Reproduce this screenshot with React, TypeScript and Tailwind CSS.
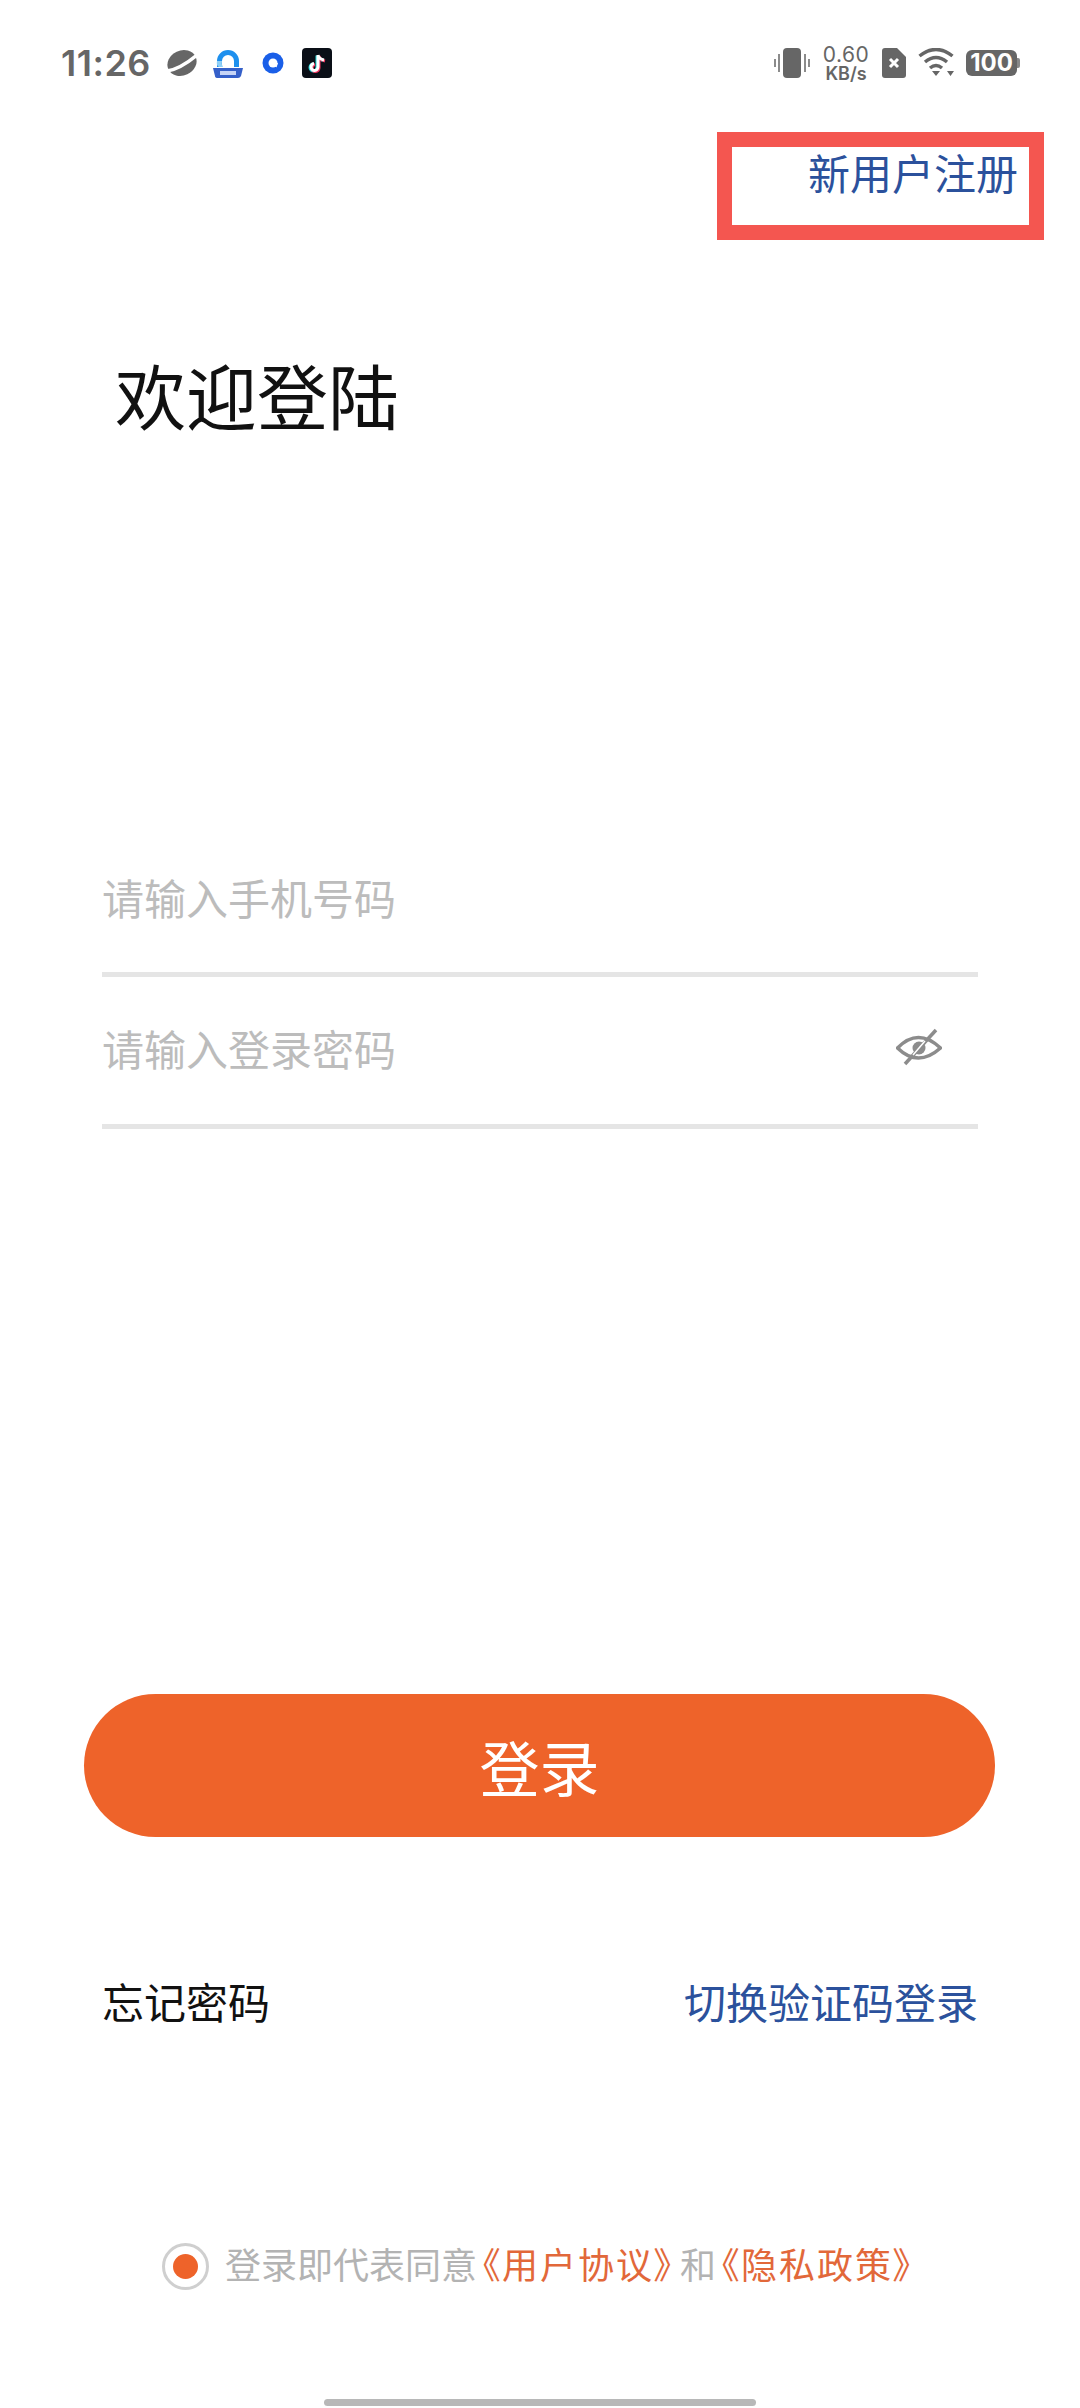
import { useState } from "react";

const cjk = "font-['Noto_Sans_CJK_SC','Noto_Sans',sans-serif]";

function StatusBar() {
  return (
    <div className="flex h-[60px] items-center justify-between pl-[61px] pr-[60px] mt-[33px] text-[#666666]">
      <div className="flex items-center">
        <span className="w-[91px] text-[36px] leading-none font-semibold tracking-[0.5px] font-['Inter',sans-serif]">11:26</span>
        <svg className="ml-[14px]" width="32" height="30" viewBox="0 0 32 30">
          <ellipse cx="16" cy="15" rx="15" ry="12.500" fill="#666" transform="rotate(-25 16 15)" />
          <path d="M1 23 Q14 21 31 7" stroke="#fff" strokeWidth="3.500" fill="none" />
        </svg>
        <svg className="ml-[14px]" width="32" height="32" viewBox="0 0 32 32">
          <path d="M5 20 V14 A11 11 0 0 1 27 14 V20 L22 20 V14 A6 6 0 0 0 10 14 V20 Z" fill="#1e90ee" />
          <path d="M5 14 Q4 18 7 20 H11 Q9 17 10 14 Z" fill="#8fd0f7" />
          <path d="M1 21 H31 L29 29 Q28 31 26 31 H6 Q3 31 3 29 Z" fill="#3560c9" />
          <rect x="8" y="24" width="16" height="4" fill="#c6d4f6" />
        </svg>
        <svg className="ml-[18px]" width="22" height="22" viewBox="0 0 22 22">
          <circle cx="11" cy="11" r="10.500" fill="#1a5fe8" />
          <circle cx="11" cy="11" r="4.500" fill="#fff" />
          <path d="M11 11 L16 11 L14.500 15.500 Z" fill="#fff" />
        </svg>
        <svg className="ml-[18px]" width="30" height="30" viewBox="0 0 30 30">
          <rect width="30" height="30" rx="4" fill="#0a0f17" />
          <path d="M16 7 V19 A3.500 3.500 0 1 1 12 15.500 M16 7 Q17 11 22 12" stroke="#25d9dc" strokeWidth="3" fill="none" transform="translate(-1 0.500)" />
          <path d="M16 7 V19 A3.500 3.500 0 1 1 12 15.500 M16 7 Q17 11 22 12" stroke="#f3355f" strokeWidth="3" fill="none" transform="translate(1 1)" />
          <path d="M16 7 V19 A3.500 3.500 0 1 1 12 15.500 M16 7 Q17 11 22 12" stroke="#fff" strokeWidth="3" fill="none" />
        </svg>
      </div>
      <div className="flex items-center">
        <svg width="36" height="30" viewBox="0 0 36 30">
          <rect x="9" y="0" width="18" height="30" rx="4" fill="#666" />
          <path d="M5 6 V24 M1 11 V19 M31 6 V24 M35 11 V19" stroke="#666" strokeWidth="1.500" />
        </svg>
        <div className="ml-[12px] flex w-[48px] flex-col items-center font-['Inter',sans-serif]">
          <span className="text-[21px] leading-[21px] font-normal tracking-[0.5px]">0.60</span>
          <span className="text-[18px] leading-[18px] font-semibold">KB/s</span>
        </div>
        <svg className="ml-[12px]" width="24" height="30" viewBox="0 0 24 30">
          <path d="M3 0 H15 L24 9 V27 Q24 30 21 30 H3 Q0 30 0 27 V3 Q0 0 3 0 Z" fill="#666" />
          <path d="M8 11 L16 19 M16 11 L8 19" stroke="#fff" strokeWidth="3" />
        </svg>
        <svg className="ml-[12px]" width="36" height="30" viewBox="0 0 36 30">
          <path d="M1.500 8 Q18 -5 34.500 8" stroke="#666" strokeWidth="3.500" fill="none" />
          <path d="M7 14 Q18 5 29 14" stroke="#666" strokeWidth="3.500" fill="none" />
          <path d="M12 20 Q18 15 24 20" stroke="#666" strokeWidth="3.500" fill="none" />
          <path d="M14 23 H22 L18 28 Z M29 23 H36 L32.500 28 Z" fill="#666" />
        </svg>
        <div className="ml-[12px] flex items-center">
          <div className="flex h-[26px] w-[51px] items-center justify-center rounded-[6px] bg-[#666666] text-[24px] font-bold leading-none text-white font-['Inter',sans-serif]">100</div>
          <div className="h-[10px] w-[3px] rounded-r-[2px] bg-[#888888]" />
        </div>
      </div>
    </div>
  );
}

function EyeOff() {
  return (
    <svg width="46" height="40" viewBox="0 0 46 40" fill="none" stroke="#8c8c8c" strokeWidth="3.500">
      <path d="M1.500 21 Q22 0 44.500 21 Q22 41 1.500 21 Z" />
      <circle cx="23" cy="21" r="6.500" fill="#8c8c8c" stroke="none" />
      <path d="M9 37 L40 3" />
      <path d="M17 28 L29 14" stroke="#fff" strokeWidth="1.500" />
    </svg>
  );
}

export default function App() {
  const [phone, setPhone] = useState("");
  const [password, setPassword] = useState("");

  return (
    <div className={`relative flex h-[2408px] w-[1080px] flex-col overflow-hidden bg-white ${cjk}`}>
      <StatusBar />

      {/* the red mark lies over the page, it is not part of the app */}
      <div className="absolute left-[717px] top-[132px] h-[108px] w-[327px] border-[15px] border-[#f45650]" />
      <div className="mt-[54px] flex justify-end pr-[62px] text-[42px] leading-[50px] text-[#2b519c]">新用户注册</div>

      <h1 className="mt-[151px] pl-[115px] text-[71px] font-normal leading-[90px] text-[#111111]">欢迎登陆</h1>

      <div className="mt-[389px] px-[102px]">
        <div className="flex h-[150px] items-center border-b-[5px] border-[#e5e5e5] pb-[7px]">
          <input
            value={phone}
            onChange={(e) => setPhone(e.target.value)}
            placeholder="请输入手机号码"
            className="w-full bg-transparent text-[42px] outline-none placeholder:text-[#bcbcbc]"
          />
        </div>
        <div className="flex h-[152px] items-center justify-between border-b-[5px] border-[#e5e5e5] pb-[7px] pr-[36px]">
          <input
            type="password"
            value={password}
            onChange={(e) => setPassword(e.target.value)}
            placeholder="请输入登录密码"
            className="w-[500px] bg-transparent text-[42px] outline-none placeholder:text-[#bcbcbc]"
          />
          <EyeOff />
        </div>
      </div>

      <button className="mx-[84px] mt-[565px] h-[143px] w-[911px] rounded-full bg-[#ee632a] text-[60px] leading-none text-white">登录</button>

      <div className="mt-[136px] flex items-center justify-between px-[102px] text-[42px] leading-[56px]">
        <span className="text-[#111111]">忘记密码</span>
        <span className="text-[#2b519c]">切换验证码登录</span>
      </div>

      <div className="mt-[213px] flex items-center pl-[162px]">
        <div className="flex h-[47px] w-[47px] items-center justify-center rounded-full border-[3px] border-[#cfcfcf]">
          <div className="h-[25px] w-[25px] rounded-full bg-[#ee632a]" />
        </div>
        <p className="relative -top-[3px] ml-[16px] whitespace-nowrap text-[36px] leading-[48px] text-[#b3b3b3]">
          登录即代表同意
          <span className="ml-[5px] mr-[6px] tracking-[2px] text-[#e2683a] [font-feature-settings:'palt']">《用户协议》</span>
          和
          <span className="ml-[5px] tracking-[2px] text-[#e2683a] [font-feature-settings:'palt']">《隐私政策》</span>
        </p>
      </div>

      <div className="absolute bottom-[2px] left-[324px] h-[7px] w-[432px] rounded-full bg-[#b8b8b8]" />
    </div>
  );
}
